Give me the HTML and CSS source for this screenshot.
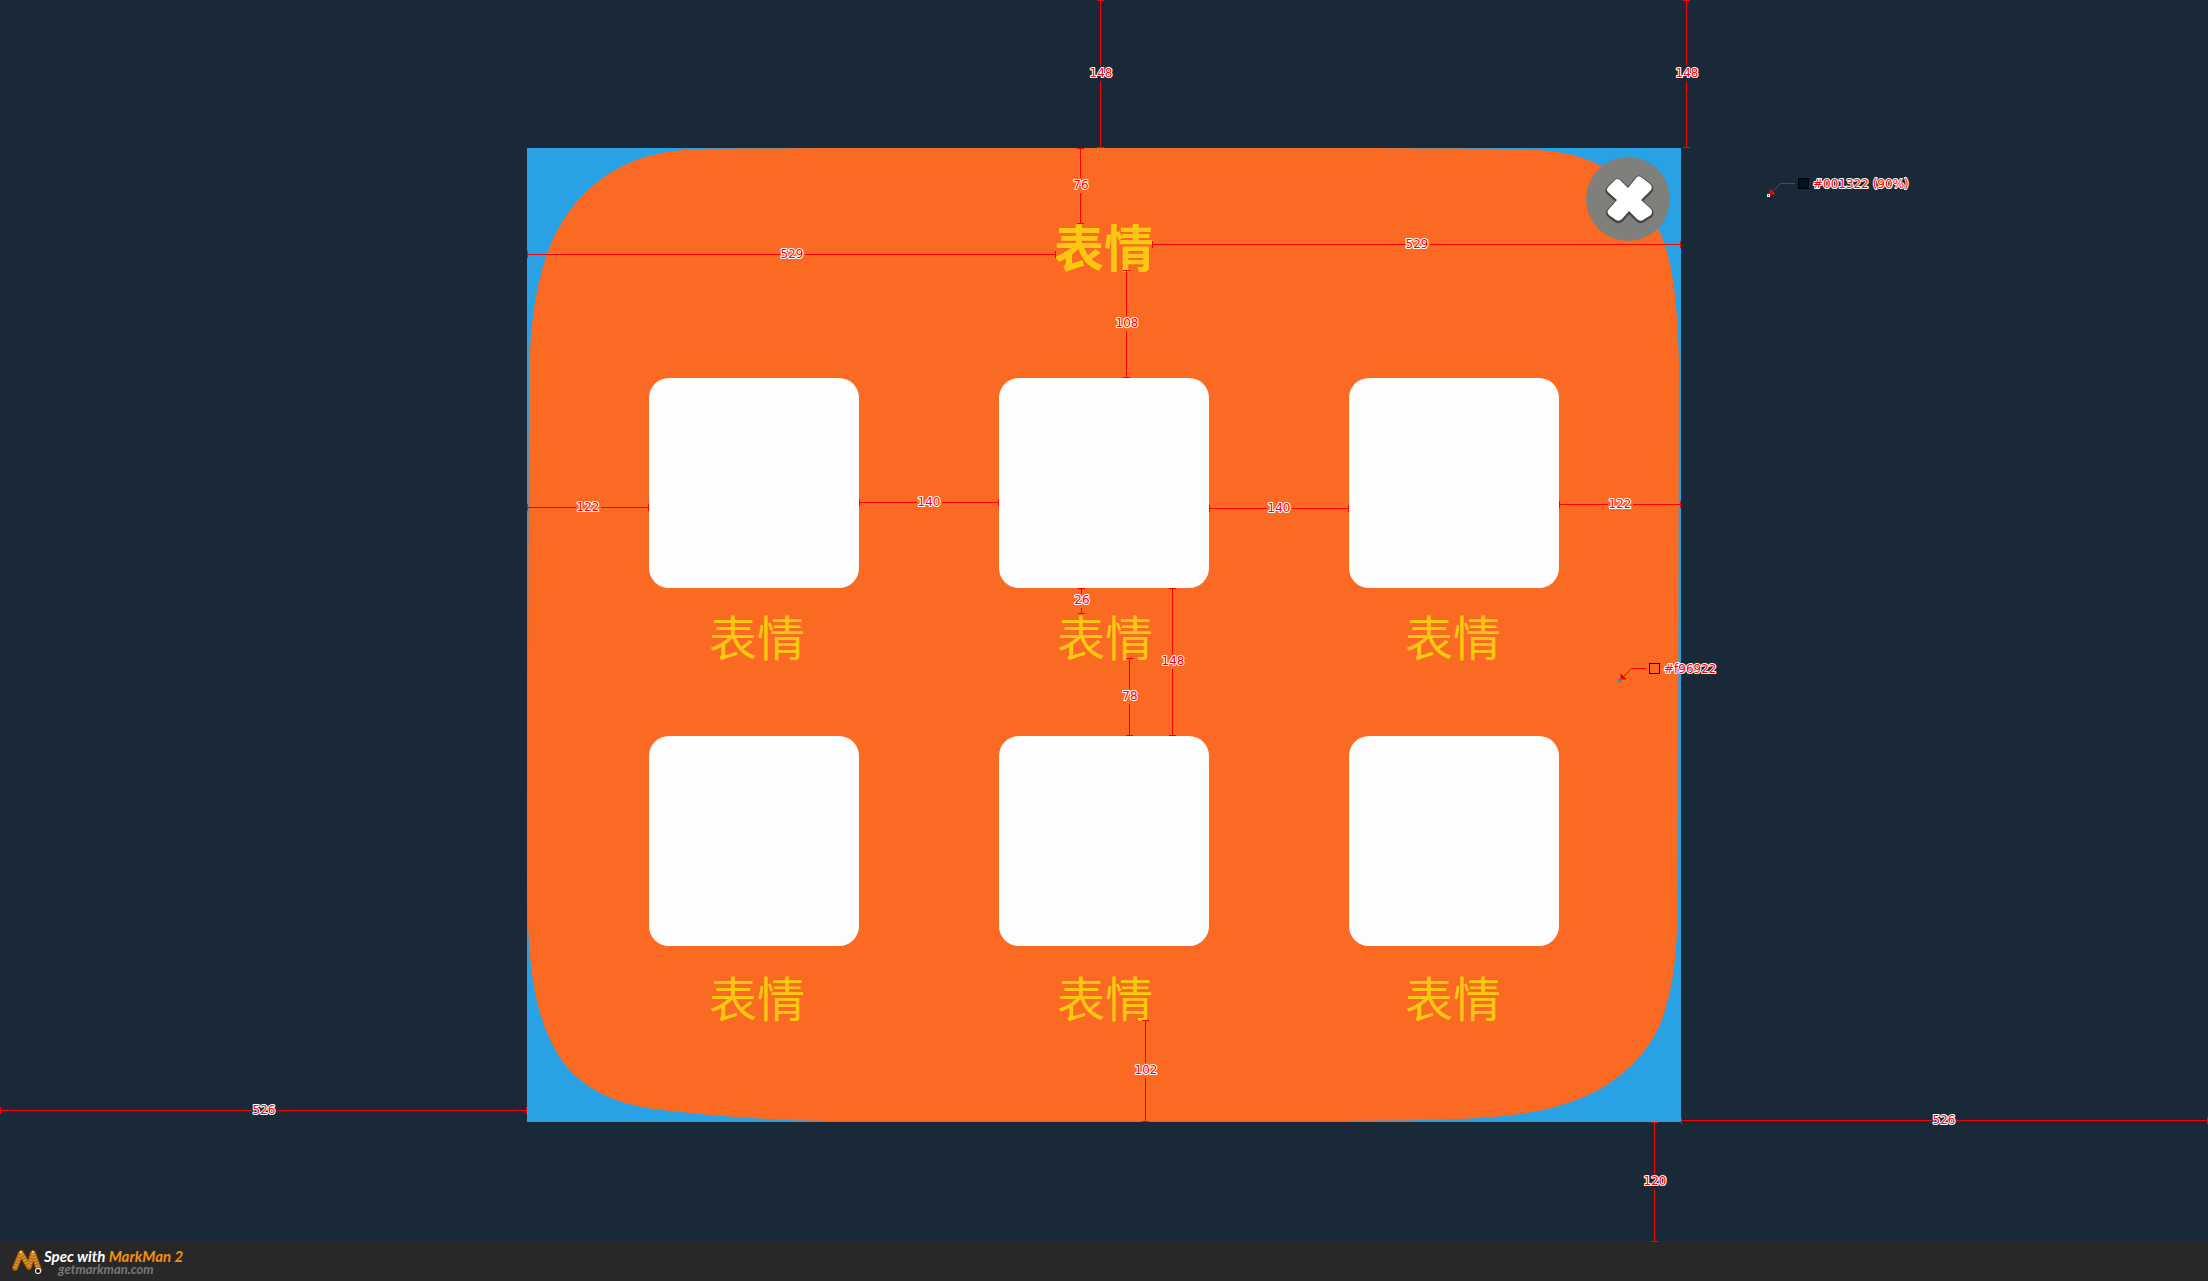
FILE: index.html
```html
<!DOCTYPE html>
<html lang="zh-CN">
<head>
<meta charset="utf-8">
<title>表情</title>
<link rel="stylesheet" href="styles.css">
</head>
<body>
<main class="canvas">
  <section class="panel">
    <svg class="panel-shape" viewBox="0 0 1154 974" preserveAspectRatio="none" aria-hidden="true">
      <path d="M300 0C210 1 180 0 155 2C88 8 42 46 20 106C5 150 2 195 2 250L0 740C1 810 5 870 36 914C58 944 96 958 135 962C185 968 245 973 330 973L800 973C880 972 950 973 1000 965C1062 955 1108 928 1132 879C1147 844 1151 800 1151 740L1152 210C1150 150 1146 110 1130 78C1110 31 1065 4 1010 2C970 0 910 1 850 0Z"/>
    </svg>
    <button class="close" aria-label="关闭" type="button">
      <svg viewBox="0 0 84 84" width="84" height="84" aria-hidden="true">
        <path class="cross-shadow" d="M29 23Q31 21 34 23L42 31L50 21Q52 18 55 20L64 27Q67 30 65 33L55 43L65 52Q67 55 65 58L57 63Q54 65 51 62L43 54L36 62Q33 65 30 63L23 58Q20 55 23 52L31 43L22 35Q20 33 22 30Z"/>
        <path class="cross" d="M29 23Q31 21 34 23L42 31L50 21Q52 18 55 20L64 27Q67 30 65 33L55 43L65 52Q67 55 65 58L57 63Q54 65 51 62L43 54L36 62Q33 65 30 63L23 58Q20 55 23 52L31 43L22 35Q20 33 22 30Z"/>
      </svg>
    </button>
    <h1 class="title">表情</h1>
    <div class="tiles"><span class="tile"></span><span class="tile"></span><span class="tile"></span></div>
    <div class="captions"><span>表情</span><span>表情</span><span>表情</span></div>
    <div class="tiles"><span class="tile"></span><span class="tile"></span><span class="tile"></span></div>
    <div class="captions captions-last"><span>表情</span><span>表情</span><span>表情</span></div>
  </section>

  <svg class="marks" viewBox="0 0 2208 1242" width="2208" height="1242">
    <g class="rules">
      <path d="M1100.5 0V66M1100.5 81V148M1097 .5h7M1097 147.5h7"/>
      <path d="M1686.5 0V66M1686.5 81V148M1683 .5h7M1683 147.5h7"/>
      <path d="M1080.5 148V178M1080.5 193V224M1077 148.5h7M1077 223.5h7"/>
      <path d="M1126.5 270V316M1126.5 331V378M1123 270.5h7M1123 377.5h7"/>
      <path d="M527 254.5H780M805 254.5H1056M527.5 251v7M1055.5 251v7"/>
      <path d="M1152 244.5H1405M1430 244.5H1681M1152.5 241v7M1680.5 241v7"/>
      <path d="M527 507.5H576M601 507.5H649M527.5 504v7M648.5 504v7"/>
      <path d="M859 502.5H917M942 502.5H999M859.5 499v7M998.5 499v7"/>
      <path d="M1209 508.5H1267M1292 508.5H1349M1209.5 505v7M1348.5 505v7"/>
      <path d="M1559 504.5H1608M1633 504.5H1681M1559.5 501v7M1680.5 501v7"/>
      <path d="M1081.5 588V594M1081.5 608V614M1078 588.5h7M1078 613.5h7"/>
      <path d="M1129.5 658V689M1129.5 704V736M1126 658.5h7M1126 735.5h7"/>
      <path d="M1172.5 588V654M1172.5 669V736M1169 588.5h7M1169 735.5h7"/>
      <path d="M1145.5 1020V1063M1145.5 1078V1122M1142 1020.5h7M1142 1121.5h7"/>
      <path d="M0 1110.5H252M277 1110.5H527M.5 1107v7M526.5 1107v7"/>
      <path d="M1681 1120.5H1932M1957 1120.5H2208M1681.5 1117v7M2207.5 1117v7"/>
      <path d="M1654.5 1122V1175M1654.5 1189V1242M1651 1122.5h7M1651 1241.5h7"/>
      <path d="M1795 183.5H1780.5L1772 192"/><path d="M1646 668.5H1631.5L1623 677"/>
    </g>
    <path class="arrow" d="M1770 189v5h5z"/><path class="arrow" d="M1621 674v5h5z"/>
    <rect x="1767.5" y="194.5" width="2" height="2" fill="#222" stroke="#fff"/>
    <rect x="1618.5" y="679.5" width="2" height="2" fill="#f96922" stroke="#0a8ee0"/>
    <rect x="1798.5" y="178.5" width="10" height="10" fill="#001322" stroke="#000"/>
    <rect x="1649.5" y="663.5" width="10" height="10" fill="#f96922" stroke="#000"/>
    <g class="values">
      <text x="1101" y="77">148</text><text x="1687" y="77">148</text>
      <text x="1081" y="189">76</text><text x="1127" y="327">108</text>
      <text x="792" y="258">529</text><text x="1417" y="248">529</text>
      <text x="588" y="511">122</text><text x="929" y="506">140</text>
      <text x="1279" y="512">140</text><text x="1620" y="508">122</text>
      <text x="1082" y="604">26</text><text x="1130" y="700">78</text>
      <text x="1173" y="665">148</text><text x="1146" y="1074">102</text>
      <text x="264" y="1114">526</text><text x="1944" y="1124">526</text>
      <text x="1655" y="1185">120</text>
    </g>
    <g class="values values-start">
      <text x="1813" y="188">#001322 (90%)</text><text x="1664" y="673">#f96922</text>
    </g>
  </svg>
</main>
<footer class="footer">
  <svg class="logo" viewBox="0 0 32 28" width="32" height="28" aria-hidden="true">
    <g fill="none" stroke-linecap="round" stroke-linejoin="round">
      <path d="M3 20L9 5L17 19L21 5L27 22" stroke="#5a3206" stroke-width="7"/>
      <path d="M3 20L9 5L17 19L21 5L27 22" stroke="#b86f18" stroke-width="5"/>
      <path d="M3 20L9 5L17 19L21 5L27 22" stroke="#e5a347" stroke-width="4" stroke-linecap="butt" stroke-dasharray="1 2"/>
    </g>
    <circle cx="9" cy="4" r="1" fill="#fff0b0"/><circle cx="21" cy="4" r="1" fill="#fff0b0"/>
    <circle cx="26" cy="23" r="3" fill="#fff"/><circle cx="26" cy="23" r="2" fill="#111"/>
  </svg>
  <div class="credit">
    <span class="credit-name">Spec with <b>MarkMan 2</b></span>
    <span class="credit-site">getmarkman.com</span>
  </div>
</footer>
</body>
</html>
```
FILE: styles.css
```css
* { box-sizing: border-box; }
body {
  margin: 0;
  min-height: 100vh;
  display: flex;
  flex-direction: column;
  background: #282828;
  font-family: "Noto Sans CJK SC", sans-serif;
}
.canvas {
  position: relative;
  padding: 148px 24px 120px;
  background: #1a2937;
  overflow: hidden;
}
.panel {
  position: relative;
  isolation: isolate;
  max-width: 1154px;
  margin: 0 auto;
  padding: 67px 122px 101px;
  background: #29a1e5;
  color: #fac812;
}
.panel-shape {
  position: absolute;
  inset: 0;
  z-index: -1;
  width: 100%;
  height: 100%;
  fill: #fa6a22;
}
.title {
  margin: 0;
  padding-bottom: 103px;
  font-size: 50px;
  line-height: 60px;
  font-weight: 700;
  text-align: center;
}
.close {
  position: absolute;
  top: 9px;
  right: 11px;
  width: 84px;
  height: 84px;
  padding: 0;
  border: 0;
  border-radius: 50%;
  background: #7f7f7b;
}
.close svg { display: block; }
.cross { fill: #fff; }
.cross-shadow { fill: #444; stroke: #444; stroke-width: 3; transform: translateY(1px); }
.tiles { display: flex; justify-content: space-between; }
.tile {
  width: 210px;
  height: 210px;
  border-radius: 20px;
  background: #fdfdfd;
}
.captions {
  display: flex;
  justify-content: space-between;
  padding: 22px 58px 76px 60px;
  font-size: 48px;
  line-height: 50px;
}
.captions-last { padding-top: 25px; padding-bottom: 0; }
.marks {
  position: absolute;
  top: 0;
  left: 50%;
  margin-left: -1104px;
  pointer-events: none;
}
.rules { fill: none; stroke: #f00; stroke-width: 1; }
.arrow { fill: #f00; stroke: #f00; }
.values {
  font-family: "DejaVu Sans", sans-serif;
  font-size: 12px;
  fill: #f00;
  stroke: #fff;
  stroke-width: 2px;
  stroke-linejoin: round;
  paint-order: stroke;
  text-anchor: middle;
}
.values-start { text-anchor: start; }
.footer {
  flex: 1;
  display: flex;
  align-items: flex-start;
  padding: 6px 12px 0;
  background: #282828;
  font-family: Lato, sans-serif;
  font-style: italic;
  font-weight: 700;
}
.credit { display: flex; flex-direction: column; }
.credit-name { font-size: 15px; line-height: 16px; color: #fff; }
.credit-name b { font-weight: 700; color: #f78e0c; }
.credit-site { padding-left: 14px; font-size: 13px; line-height: 11px; color: #777; }
```
